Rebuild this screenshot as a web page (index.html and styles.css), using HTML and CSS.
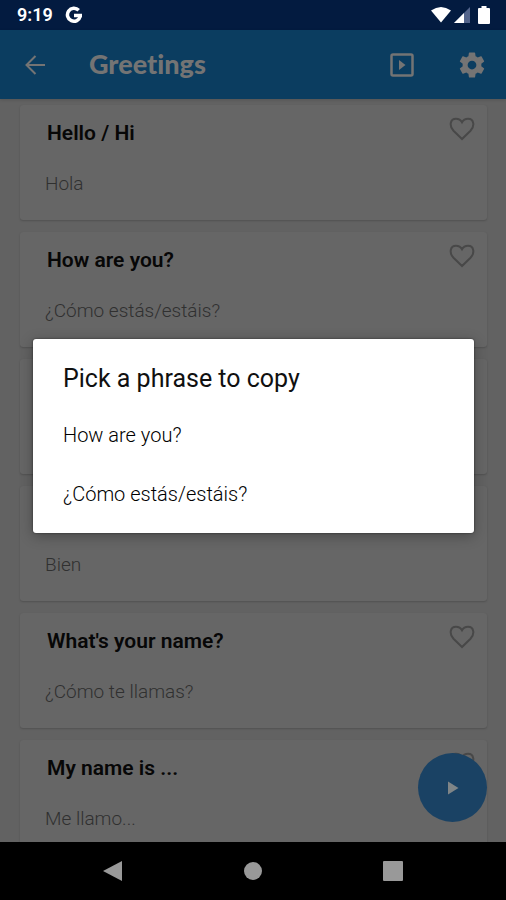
FILE: index.html
```html
<!DOCTYPE html>
<html lang="en">
<head>
<meta charset="utf-8">
<meta name="viewport" content="width=device-width, initial-scale=1">
<title>Greetings</title>
<link rel="stylesheet" href="styles.css">
</head>
<body>
<div class="status">
  <div class="status-group">
    <span class="clock">9:19</span>
    <svg width="18" height="18" viewBox="0 0 18 18" fill="none" stroke="#fff" stroke-width="3.500"><path d="M13.700 4.300A6.500 6.500 0 1 0 15.300 10.200M9 9.500h8"/></svg>
  </div>
  <div class="status-icons">
    <svg width="20" height="18" viewBox="0 0 20 18" fill="#fff"><path d="M0 4.500Q10-2.500 20 4.500L10 16.500Z"/></svg>
    <svg width="16" height="18" viewBox="0 0 16 18"><path d="M0 17L16 1V17Z" fill="#53648b"/><path d="M0 17L10 7V17Z" fill="#fff"/></svg>
    <svg class="battery" width="12" height="18" viewBox="0 0 12 18" fill="#fff"><path d="M3.500 0h5v2H11a1 1 0 0 1 1 1v14a1 1 0 0 1-1 1H1a1 1 0 0 1-1-1V3a1 1 0 0 1 1-1h2.500Z"/></svg>
  </div>
</div>
<div class="app">
  <header class="bar">
    <button class="icon-btn" aria-label="Back"><svg width="20" height="20" viewBox="0 0 20 20" fill="none" stroke="#747474" stroke-width="2"><path d="M20 10H2M10.500 1L1.500 10l9 9"/></svg></button>
    <h1>Greetings</h1>
    <button class="icon-btn" aria-label="Slideshow"><svg width="24" height="24" viewBox="0 0 24 24"><rect x="1.500" y="1.500" width="21" height="21" rx="1.500" fill="none" stroke="#747474" stroke-width="2.500"/><path d="M9 7l6.500 5L9 17Z" fill="#747474"/></svg></button>
    <button class="icon-btn" aria-label="Settings"><svg width="30" height="30" viewBox="0 0 24 24" fill="#747474"><path d="M19.430 12.980c.04-.32.07-.64.07-.98s-.03-.66-.07-.98l2.110-1.650c.19-.15.24-.42.12-.64l-2-3.460c-.12-.22-.39-.3-.61-.22l-2.490 1c-.52-.4-1.080-.73-1.690-.98l-.38-2.650A.488.488 0 0 0 14 2h-4c-.25 0-.46.18-.49.42l-.38 2.650c-.61.25-1.170.59-1.690.98l-2.490-1c-.23-.09-.49 0-.61.22l-2 3.460c-.13.22-.07.49.12.64l2.110 1.650c-.04.32-.07.65-.07.98s.03.66.07.98l-2.110 1.650c-.19.15-.24.42-.12.64l2 3.460c.12.22.39.3.61.22l2.490-1c.52.4 1.080.73 1.690.98l.38 2.650c.03.24.24.42.49.42h4c.25 0 .46-.18.49-.42l.38-2.650c.61-.25 1.170-.59 1.690-.98l2.490 1c.23.09.49 0 .61-.22l2-3.460c.12-.22.07-.49-.12-.64l-2.110-1.650zM12 15.500a3.500 3.500 0 1 1 0-7 3.500 3.500 0 0 1 0 7z"/></svg></button>
  </header>
  <main class="list">
    <article class="card">
      <div class="head"><h2>Hello / Hi</h2><button class="heart" aria-label="Favorite"><svg width="26" height="24" viewBox="0 0 26 24"><path d="M13 22L4.500 13.800C0 9 1 1.800 7 1.800c3 0 5 1.700 6 3.500 1-1.800 3-3.500 6-3.500 6 0 7 7.200 2.500 12Z"/></svg></button></div>
      <p>Hola</p>
    </article>
    <article class="card">
      <div class="head"><h2>How are you?</h2><button class="heart" aria-label="Favorite"><svg width="26" height="24" viewBox="0 0 26 24"><path d="M13 22L4.500 13.800C0 9 1 1.800 7 1.800c3 0 5 1.700 6 3.500 1-1.800 3-3.500 6-3.500 6 0 7 7.200 2.500 12Z"/></svg></button></div>
      <p>¿Cómo estás/estáis?</p>
    </article>
    <article class="card"></article>
    <article class="card">
      <div class="head"></div>
      <p>Bien</p>
    </article>
    <article class="card">
      <div class="head"><h2>What's your name?</h2><button class="heart" aria-label="Favorite"><svg width="26" height="24" viewBox="0 0 26 24"><path d="M13 22L4.500 13.800C0 9 1 1.800 7 1.800c3 0 5 1.700 6 3.500 1-1.800 3-3.500 6-3.500 6 0 7 7.200 2.500 12Z"/></svg></button></div>
      <p>¿Cómo te llamas?</p>
    </article>
    <article class="card">
      <div class="head"><h2>My name is ...</h2><button class="heart" aria-label="Favorite"><svg width="26" height="24" viewBox="0 0 26 24"><path d="M13 22L4.500 13.800C0 9 1 1.800 7 1.800c3 0 5 1.700 6 3.500 1-1.800 3-3.500 6-3.500 6 0 7 7.200 2.500 12Z"/></svg></button></div>
      <p>Me llamo...</p>
    </article>
  </main>
  <button class="fab" aria-label="Play"><svg width="12" height="14" viewBox="0 0 12 14" fill="#7f8587"><path d="M1 0.500L11.500 7L1 13.500Z"/></svg></button>
  <div class="overlay">
    <section class="dialog" role="dialog" aria-labelledby="dialog-title">
      <h2 id="dialog-title">Pick a phrase to copy</h2>
      <button class="option">How are you?</button>
      <button class="option">¿Cómo estás/estáis?</button>
    </section>
  </div>
</div>
<nav class="nav">
  <button aria-label="Back"><svg width="20" height="22" viewBox="0 0 20 22"><path d="M0 11L19 1V21Z"/></svg></button>
  <button aria-label="Home"><svg width="20" height="20" viewBox="0 0 20 20"><circle cx="10" cy="10" r="9"/></svg></button>
  <button aria-label="Recent apps"><svg width="20" height="20" viewBox="0 0 20 20"><rect width="20" height="20" rx="1"/></svg></button>
</nav>
</body>
</html>
```
FILE: styles.css
```css
* { box-sizing: border-box; }
body {
  margin: 0;
  height: 100vh;
  display: flex;
  flex-direction: column;
  background: #626262;
  font-family: Roboto, "Liberation Sans", sans-serif;
}
h1, h2, p { margin: 0; }
svg { display: block; }
button {
  border: 0;
  padding: 0;
  background: none;
  font: inherit;
  color: inherit;
}
.status {
  flex: none;
  height: 30px;
  padding: 0 16px 0 17px;
  display: flex;
  align-items: center;
  justify-content: space-between;
  background: #031b40;
  color: #fff;
}
.status-group { display: flex; align-items: center; gap: 12px; }
.status-icons { display: flex; align-items: center; gap: 3px; }
.battery { margin-left: 5px; }
.clock { font-size: 18px; font-weight: 600; line-height: 32px; }
.app {
  position: relative;
  flex: 1;
  min-height: 0;
  display: flex;
  flex-direction: column;
}
.bar {
  flex: none;
  height: 69px;
  padding: 0 16px;
  display: flex;
  align-items: center;
  gap: 33px;
  background: #0b3d60;
  color: #747474;
  box-shadow: 0 1px 3px rgba(0, 0, 0, 0.15);
  z-index: 1;
}
.bar h1 {
  flex: 1;
  padding: 0 0 2px 3px;
  font-family: Lato, sans-serif;
  font-size: 27px;
  font-weight: 900;
  font-variant-ligatures: none;
  line-height: 32px;
}
.icon-btn { width: 37px; height: 40px; display: grid; place-items: center; }
.list {
  flex: 1;
  min-height: 0;
  overflow: hidden;
  padding: 6px 19px 0 20px;
  display: flex;
  flex-direction: column;
  gap: 12px;
}
.card {
  flex: none;
  min-height: 115px;
  padding: 12px 12px 0 25px;
  border-radius: 3px;
  background: #666;
  box-shadow: 0 1px 2px rgba(0, 0, 0, 0.18);
}
.head { display: flex; justify-content: space-between; min-height: 32px; }
.head h2 { padding-left: 2px; font-size: 21px; font-weight: 600; line-height: 32px; color: #070707; }
.heart { height: 24px; }
.heart path { fill: none; stroke: #484848; stroke-width: 2; }
.card p { margin-top: 19px; font-size: 19px; font-weight: 300; line-height: 32px; color: #303030; }
.fab {
  position: absolute;
  right: 19px;
  bottom: 20px;
  width: 69px;
  height: 69px;
  border-radius: 50%;
  display: grid;
  place-items: center;
  background: #1a4264;
  z-index: 2;
}
.overlay {
  position: absolute;
  inset: 0;
  padding: 0 32px 0 33px;
  display: flex;
  align-items: center;
  z-index: 3;
}
.dialog {
  flex: 1;
  padding: 24px 30px 10px;
  display: flex;
  flex-direction: column;
  border-radius: 3px;
  background: #fff;
  color: #101010;
  box-shadow: 0 3px 14px rgba(0, 0, 0, 0.3), 0 0 2px rgba(0, 0, 0, 0.6);
}
.dialog h2 { margin-bottom: 10px; font-size: 25px; font-weight: 400; line-height: 32px; }
.option { height: 59px; font-size: 20px; font-weight: 300; text-align: left; color: #000; }
.nav {
  flex: none;
  height: 58px;
  padding: 0 43px;
  display: grid;
  grid-template-columns: repeat(3, 1fr);
  align-items: center;
  background: #000;
}
.nav button { height: 40px; display: grid; place-items: center; }
.nav svg { fill: #999; }
```
